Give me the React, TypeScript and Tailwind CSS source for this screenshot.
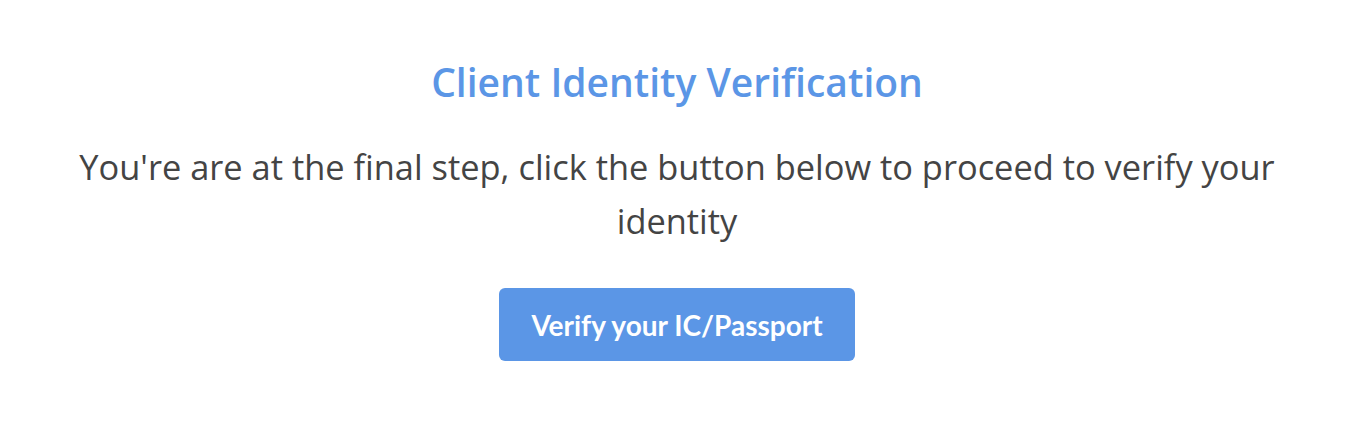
import React from "react";

export default function App() {
  return (
    <div className="w-[1366px] h-[440px] bg-white pr-[12px]">
      <div className="flex flex-col items-center">
        <h1 className="mt-[56px] text-[39px] leading-[52px] font-semibold text-[#5b96e6] font-['Open_Sans',sans-serif]">
          Client Identity Verification
        </h1>
        <p className="mt-[32px] w-[1240px] text-center text-[34.4px] leading-[54px] text-[#444444] font-['Open_Sans',sans-serif]">
          You're are at the final step, click the button below to proceed to verify your identity
        </p>
        <button className="mt-[40px] w-[356px] h-[73px] rounded-[6px] bg-[#5b96e6] text-white text-[28px] font-bold font-['Lato',sans-serif]">
          Verify your IC/Passport
        </button>
      </div>
    </div>
  );
}
